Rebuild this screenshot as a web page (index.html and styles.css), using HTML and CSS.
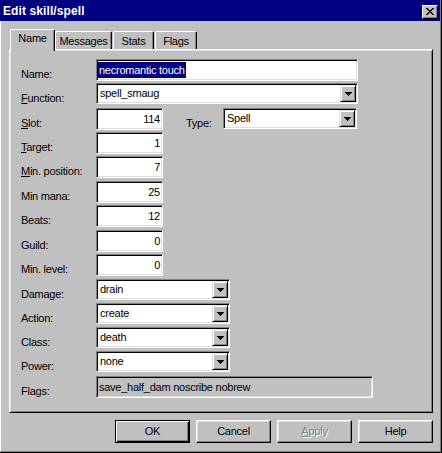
FILE: index.html
```html
<!DOCTYPE html>
<html>
<head>
<meta charset="utf-8">
<link rel="stylesheet" href="styles.css">
</head>
<body>
<div class="window">
  <div class="titlebar">
    <span class="title">Edit skill/spell</span>
    <span class="close">
      <svg width="8" height="7" viewBox="0 0 8 7" shape-rendering="crispEdges"><path fill="#000" d="M0 0h2v1H0zM6 0h2v1H6zM1 1h2v1H1zM5 1h2v1H5zM2 2h4v1H2zM3 3h2v1H3zM2 4h4v1H2zM1 5h2v1H1zM5 5h2v1H5zM0 6h2v1H0zM6 6h2v1H6z"/></svg>
    </span>
  </div>
  <div class="body">
    <div class="tabs">
      <div class="tab active tab-name">Name</div>
      <div class="tab tab-messages">Messages</div>
      <div class="tab tab-stats">Stats</div>
      <div class="tab tab-flags">Flags</div>
    </div>
    <div class="panel">
      <div class="row r24"><span class="lbl">Name:</span><div class="field edit w-name"><span class="sel">necromantic touch</span></div></div>
      <div class="row r25"><span class="lbl"><u>F</u>unction:</span><div class="field combo w-name"><span class="val">spell_smaug</span><span class="dd"><svg width="7" height="4" viewBox="0 0 7 4" shape-rendering="crispEdges"><path d="M0 0h7v1h-1v1h-1v1h-1v1h-1v-1h-1v-1h-1v-1h-1z"/></svg></span></div></div>
      <div class="row r24"><span class="lbl"><u>S</u>lot:</span><div class="field edit num">114</div><span class="lbl type-lbl">Type:</span><div class="field combo w-combo"><span class="val">Spell</span><span class="dd"><svg width="7" height="4" viewBox="0 0 7 4" shape-rendering="crispEdges"><path d="M0 0h7v1h-1v1h-1v1h-1v1h-1v-1h-1v-1h-1v-1h-1z"/></svg></span></div></div>
      <div class="row r24"><span class="lbl"><u>T</u>arget:</span><div class="field edit num">1</div></div>
      <div class="row r25"><span class="lbl"><u>M</u>in. position:</span><div class="field edit num">7</div></div>
      <div class="row r24"><span class="lbl">Min mana:</span><div class="field edit num">25</div></div>
      <div class="row r25"><span class="lbl">Beats:</span><div class="field edit num">12</div></div>
      <div class="row r24"><span class="lbl">Guild:</span><div class="field edit num">0</div></div>
      <div class="row r25"><span class="lbl">Min. level:</span><div class="field edit num">0</div></div>
      <div class="row r24"><span class="lbl">Damage:</span><div class="field combo w-combo"><span class="val">drain</span><span class="dd"><svg width="7" height="4" viewBox="0 0 7 4" shape-rendering="crispEdges"><path d="M0 0h7v1h-1v1h-1v1h-1v1h-1v-1h-1v-1h-1v-1h-1z"/></svg></span></div></div>
      <div class="row r24"><span class="lbl">Action:</span><div class="field combo w-combo"><span class="val">create</span><span class="dd"><svg width="7" height="4" viewBox="0 0 7 4" shape-rendering="crispEdges"><path d="M0 0h7v1h-1v1h-1v1h-1v1h-1v-1h-1v-1h-1v-1h-1z"/></svg></span></div></div>
      <div class="row r24"><span class="lbl">Class:</span><div class="field combo w-combo"><span class="val">death</span><span class="dd"><svg width="7" height="4" viewBox="0 0 7 4" shape-rendering="crispEdges"><path d="M0 0h7v1h-1v1h-1v1h-1v1h-1v-1h-1v-1h-1v-1h-1z"/></svg></span></div></div>
      <div class="row r25"><span class="lbl">Power:</span><div class="field combo w-combo"><span class="val">none</span><span class="dd"><svg width="7" height="4" viewBox="0 0 7 4" shape-rendering="crispEdges"><path d="M0 0h7v1h-1v1h-1v1h-1v1h-1v-1h-1v-1h-1v-1h-1z"/></svg></span></div></div>
      <div class="row"><span class="lbl">Flags:</span><div class="field edit readonly w-flags">save_half_dam noscribe nobrew</div></div>
    </div>
    <div class="buttons">
      <div class="btn default">OK</div>
      <div class="btn">Cancel</div>
      <div class="btn disabled"><u>A</u>pply</div>
      <div class="btn">Help</div>
    </div>
  </div>
</div>
</body>
</html>
```
FILE: styles.css
```css
* { box-sizing: border-box; }
html, body { margin: 0; padding: 0; background: #c0c0c0; }
body {
  font-family: "Liberation Sans", Arial, sans-serif;
  font-size: 11px;
  letter-spacing: -0.25px;
  color: #000;
}
.window {
  width: 442px;
  height: 453px;
  display: flex;
  flex-direction: column;
  border-right: 1px solid #000;
  border-bottom: 1px solid #000;
  background: #c0c0c0;
}
.titlebar {
  height: 21px;
  flex: none;
  display: flex;
  align-items: flex-start;
  justify-content: space-between;
  background: #000080;
  border-right: 1px solid #808080;
}
.title {
  color: #fff;
  font-weight: bold;
  font-size: 12px;
  letter-spacing: 0.1px;
  line-height: 19px;
  padding: 2px 0 0 3px;
}
.close {
  width: 16px;
  height: 14px;
  margin: 5px 2px 0 0;
  background: #c0c0c0;
  border-top: 1px solid #fff;
  border-left: 1px solid #fff;
  border-right: 1px solid #000;
  border-bottom: 1px solid #000;
  box-shadow: inset -1px -1px #808080;
  display: flex;
  align-items: center;
  justify-content: center;
  padding: 0 0 1px 0;
}
.close svg { display: block; }
.body {
  flex: 1;
  border-left: 1px solid #fff;
  border-right: 1px solid #808080;
  border-bottom: 1px solid #808080;
  padding-top: 8px;
}
.tabs {
  height: 20px;
  margin-left: 9px;
  display: flex;
  align-items: flex-end;
  position: relative;
  z-index: 1;
}
.tab {
  height: 18px;
  background: #c0c0c0;
  border-top: 1px solid #fff;
  border-left: 1px solid #fff;
  border-right: 1px solid #000;
  border-top-left-radius: 2px;
  border-top-right-radius: 2px;
  box-shadow: inset -1px 0 #808080;
  text-align: center;
  line-height: 13px;
  padding-top: 3px;
}
.tab.active {
  height: 22px;
  margin-bottom: -2px;
  padding-top: 2px;
}
.tab-name { width: 45px; }
.tab-messages { width: 57px; }
.tab-stats { width: 41px; margin-left: 1px; }
.tab-flags { width: 42px; margin-left: 1px; }
.panel {
  margin-left: 8px;
  width: 424px;
  height: 364px;
  border-top: 1px solid #fff;
  border-left: 1px solid #fff;
  border-right: 1px solid #000;
  border-bottom: 1px solid #000;
  box-shadow: inset 1px 1px #dfdfdf, inset -1px -1px #808080;
  padding: 9px 0 0 11px;
  display: flex;
  flex-direction: column;
}
.row {
  display: flex;
  align-items: flex-start;
  flex: none;
}
.r24 { height: 24px; }
.r25 { height: 25px; }
.lbl {
  width: 75px;
  flex: none;
  line-height: 13px;
  padding-top: 9px;
  white-space: nowrap;
}
.type-lbl {
  width: auto;
  margin: 0 0 0 23px;
  width: 37px;
}
.field {
  height: 22px;
  flex: none;
  background: #fff;
  border-top: 1px solid #808080;
  border-left: 1px solid #808080;
  border-right: 1px solid #fff;
  border-bottom: 1px solid #fff;
  box-shadow: inset 1px 1px #000, inset -1px -1px #dfdfdf;
  padding: 1px;
  line-height: 18px;
  white-space: nowrap;
  overflow: hidden;
}
.edit { padding-left: 2px; padding-right: 2px; }
.combo {
  height: 21px;
  display: flex;
  line-height: 17px;
}
.combo .val { flex: 1; padding-left: 2px; }
.dd {
  width: 16px;
  height: 17px;
  flex: none;
  background: #c0c0c0;
  border-top: 1px solid #dfdfdf;
  border-left: 1px solid #dfdfdf;
  border-right: 1px solid #000;
  border-bottom: 1px solid #000;
  box-shadow: inset 1px 1px #fff, inset -1px -1px #808080;
  display: flex;
  align-items: center;
  justify-content: center;
  padding-left: 1px;
}
.dd svg { display: block; }
.w-name { width: 262px; }
.w-combo { width: 134px; }
.w-flags { width: 277px; }
.num { width: 67px; text-align: right; }
.readonly { background: #c0c0c0; }
.sel {
  background: #000080;
  color: #fff;
  display: inline-block;
  line-height: 16px;
  padding: 0 1px 0 1px;
  margin-left: -1px;
}
.buttons {
  display: flex;
  gap: 6px;
  margin: 7px 0 0 114px;
}
.btn {
  width: 75px;
  height: 23px;
  background: #c0c0c0;
  border-top: 1px solid #fff;
  border-left: 1px solid #fff;
  border-right: 1px solid #000;
  border-bottom: 1px solid #000;
  box-shadow: inset -1px -1px #808080, inset 1px 1px #dfdfdf;
  text-align: center;
  line-height: 19px;
  padding-top: 1px;
}
.btn.default {
  border: 1px solid #000;
  box-shadow: inset 1px 1px #fff, inset -1px -1px #000, inset -2px -2px #808080;
}
.btn.disabled {
  color: #808080;
  text-shadow: 1px 1px 0 #fff;
}
```
